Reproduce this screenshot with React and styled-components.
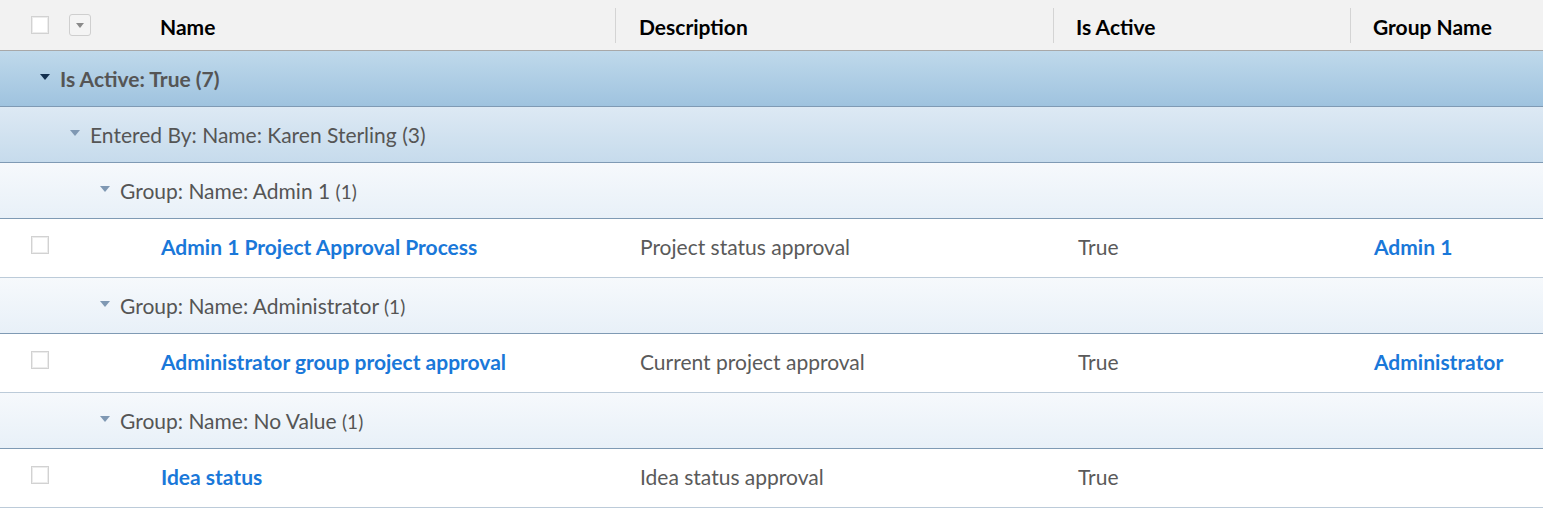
import React from 'react'
import styled, { createGlobalStyle } from 'styled-components'

const Global = createGlobalStyle`
  html, body { margin: 0; padding: 0; background: #fff; }
  body { font-family: Lato, "Open Sans", "Liberation Sans", sans-serif; }
`

const COLS = '140px 475px 438px 297px 1fr'

const Table = styled.div`
  width: 100%;
  display: flex;
  flex-direction: column;
`

const HeaderRow = styled.div`
  display: grid;
  grid-template-columns: ${COLS};
  height: 50px;
  background: #f2f2f2;
  border-bottom: 1px solid #a8a8a8;
  align-items: center;
`

const HeadTools = styled.div`
  display: flex;
  align-items: center;
  gap: 20px;
  padding-left: 31px;
  height: 100%;
`

const HeadCell = styled.div`
  position: relative;
  height: 100%;
  display: flex;
  align-items: center;
  padding-left: ${p => p.$pad}px;
  padding-top: 2px;
  box-sizing: border-box;
  font-size: 21px;
  font-weight: 700;
  color: #000;
  &::before {
    content: '';
    display: ${p => (p.$divider ? 'block' : 'none')};
    position: absolute;
    left: 0;
    top: 8px;
    bottom: 7px;
    width: 1px;
    background: #d4d4d4;
  }
`

const Check = styled.span`
  display: inline-block;
  width: 16px;
  height: 16px;
  border: 1px solid #d2d2d2;
  background: #fff;
  box-shadow: inset 0 0 0 1px #ececec;
`

const MenuBtn = styled.span`
  width: 20px;
  height: 20px;
  border: 1px solid #cfcfcf;
  border-radius: 3px;
  background: #f4f4f4;
  display: flex;
  align-items: center;
  justify-content: center;
  &::after {
    content: '';
    border-left: 4px solid transparent;
    border-right: 4px solid transparent;
    border-top: 5px solid #8a8a8a;
    margin-top: 1px;
  }
`

const levels = {
  1: { bg: 'linear-gradient(#bfd9eb, #9fc3df)', caret: '#13304f', weight: 700, border: '#7f9ab4' },
  2: { bg: 'linear-gradient(#dde9f4, #c6dbec)', caret: '#7f98b3', weight: 400, border: '#7f9ab4' },
  3: { bg: 'linear-gradient(#f6f9fc, #e8f0f8)', caret: '#7f98b3', weight: 400, border: '#7f9ab4' },
}

const GroupRow = styled.div`
  height: 55px;
  background: ${p => levels[p.$level].bg};
  border-bottom: 1px solid ${p => levels[p.$level].border};
  display: flex;
  align-items: center;
  padding-left: ${p => 40 + (p.$level - 1) * 30}px;
  gap: 10px;
  font-size: 21px;
  font-weight: ${p => levels[p.$level].weight};
  color: #555;
`

const Caret = styled.span`
  width: 0;
  height: 0;
  border-left: 5px solid transparent;
  border-right: 5px solid transparent;
  border-top: 6px solid ${p => p.$color};
  margin-top: -3px;
`

const Count = styled.span`
  font-size: 19px;
`

const DataRow = styled.div`
  display: grid;
  grid-template-columns: ${COLS};
  height: 58px;
  background: #fff;
  border-bottom: 1px solid #bccbd9;
  align-items: center;
  font-size: 21px;
  color: #5a5a5a;
`

const CheckCell = styled.div`
  padding-left: 31px;
  display: flex;
  align-items: center;
  margin-top: -6px;
`

const Cell = styled.div`
  padding-left: ${p => p.$pad}px;
  margin-top: -3px;
  white-space: nowrap;
`

const Link = styled.a`
  color: #1a78d9;
  font-weight: 700;
  text-decoration: none;
`

const data = [
  {
    group: 'Group: Name: Admin 1',
    count: 1,
    name: 'Admin 1 Project Approval Process',
    desc: 'Project status approval',
    active: 'True',
    groupName: 'Admin 1',
  },
  {
    group: 'Group: Name: Administrator',
    count: 1,
    name: 'Administrator group project approval',
    desc: 'Current project approval',
    active: 'True',
    groupName: 'Administrator',
  },
  {
    group: 'Group: Name: No Value',
    count: 1,
    name: 'Idea status',
    desc: 'Idea status approval',
    active: 'True',
    groupName: '',
  },
]

export default function App() {
  return (
    <Table>
      <Global />
      <HeaderRow>
        <HeadTools>
          <Check />
          <MenuBtn />
        </HeadTools>
        <HeadCell $pad={20}>Name</HeadCell>
        <HeadCell $pad={24} $divider>Description</HeadCell>
        <HeadCell $pad={23} $divider>Is Active</HeadCell>
        <HeadCell $pad={23} $divider>Group Name</HeadCell>
      </HeaderRow>
      <GroupRow $level={1}>
        <Caret $color={levels[1].caret} />
        <span>Is Active: True (7)</span>
      </GroupRow>
      <GroupRow $level={2}>
        <Caret $color={levels[2].caret} />
        <span>Entered By: Name: Karen Sterling (3)</span>
      </GroupRow>
      {data.map(row => (
        <React.Fragment key={row.name}>
          <GroupRow $level={3}>
            <Caret $color={levels[3].caret} />
            <span>
              {row.group} <Count>({row.count})</Count>
            </span>
          </GroupRow>
          <DataRow>
            <CheckCell>
              <Check />
            </CheckCell>
            <Cell $pad={21}>
              <Link href="#">{row.name}</Link>
            </Cell>
            <Cell $pad={25}>{row.desc}</Cell>
            <Cell $pad={25}>{row.active}</Cell>
            <Cell $pad={24}>
              {row.groupName && <Link href="#">{row.groupName}</Link>}
            </Cell>
          </DataRow>
        </React.Fragment>
      ))}
    </Table>
  )
}
